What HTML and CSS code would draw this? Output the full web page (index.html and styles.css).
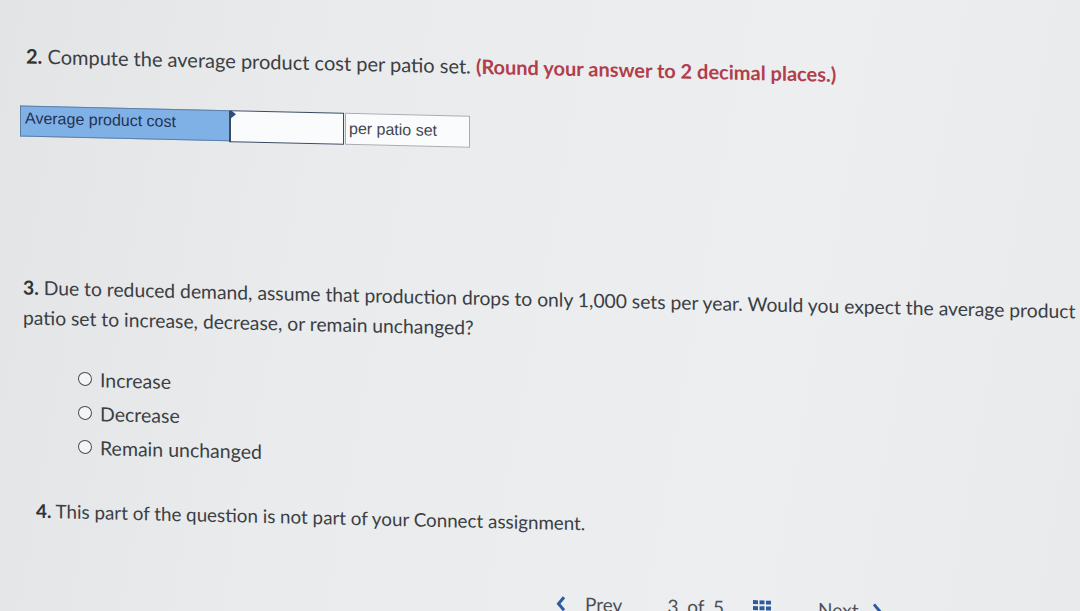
FILE: index.html
```html
<!DOCTYPE html>
<html lang="en">
<head>
  <meta charset="UTF-8">
  <meta name="viewport" content="width=device-width, initial-scale=1.0">
  <title>Question 3 of 5</title>
  <link rel="stylesheet" href="styles.css">
</head>

<body>
  <main class="question">
    <section class="part part-2">
      <p class="prompt">
        <b class="num">2.</b> Compute the average product cost per patio set.
        <strong class="hint">(Round your answer to 2 decimal places.)</strong>
      </p>
      <div class="answer-row">
        <span class="answer-label">Average product cost</span>
        <span class="answer-input"><span class="flag"></span></span>
        <span class="answer-unit">per patio set</span>
      </div>
    </section>

    <section class="part part-3">
      <p class="prompt">
        <b class="num">3.</b> Due to reduced demand, assume that production drops to only 1,000 sets per year. Would you expect the average product cost per
        patio set to increase, decrease, or remain unchanged?
      </p>
      <ul class="choices">
        <li><span class="radio"></span>Increase</li>
        <li><span class="radio"></span>Decrease</li>
        <li><span class="radio"></span>Remain unchanged</li>
      </ul>
    </section>

    <section class="part part-4">
      <p class="prompt"><b class="num">4.</b> This part of the question is not part of your Connect assignment.</p>
    </section>

    <nav class="pager">
      <a class="prev" href="#">
        <svg class="chev" viewBox="0 0 10 16" width="10" height="16">
          <path d="M8 1.5 L2.5 8 L8 14.5" fill="none" stroke="currentColor" stroke-width="3" />
        </svg>
        Prev
      </a>
      <span class="count"><span>3</span> of <span>5</span></span>
      <span class="grid-icon">
        <svg viewBox="0 0 18 16" width="18" height="16">
          <rect x="0" y="0" width="5" height="4" fill="currentColor" />
          <rect x="6.5" y="0" width="5" height="4" fill="currentColor" />
          <rect x="13" y="0" width="5" height="4" fill="currentColor" />
          <rect x="0" y="6" width="5" height="4" fill="currentColor" />
          <rect x="6.5" y="6" width="5" height="4" fill="currentColor" />
          <rect x="13" y="6" width="5" height="4" fill="currentColor" />
          <rect x="0" y="12" width="5" height="4" fill="currentColor" />
          <rect x="6.5" y="12" width="5" height="4" fill="currentColor" />
          <rect x="13" y="12" width="5" height="4" fill="currentColor" />
        </svg>
      </span>
      <a class="next" href="#">
        Next
        <svg class="chev" viewBox="0 0 10 16" width="10" height="16">
          <path d="M2 1.5 L7.5 8 L2 14.5" fill="none" stroke="currentColor" stroke-width="3" />
        </svg>
      </a>
    </nav>
  </main>
</body>
</html>
```

FILE: styles.css
```css
/* Page */
html, body {
  margin: 0;
  height: 100%;
  overflow: hidden;
}

body {
  background: linear-gradient(100deg, #e2e4e6 0%, #e9ebed 30%, #eceef0 70%, #e8eaec 100%);
  font-family: Lato, "Open Sans", sans-serif;
  color: #3b3e43;
}

/* the photo is taken slightly skewed */
.question {
  transform: skewY(1.3deg);
  transform-origin: 0 0;
  padding: 40px 0 0 26px;
}

.prompt {
  margin: 0;
  font-size: 19px;
  line-height: 30px;
}

.part-2 .prompt {
  font-size: 20px;
}

.num {
  font-weight: bold;
  color: #2f3236;
}

.hint {
  color: #b23d4b;
}

/* Answer row */
.answer-row {
  display: flex;
  align-items: flex-start;
  margin: 35px 0 0 -6px;
  font-family: "Liberation Sans", Arial, sans-serif;
  font-size: 16px;
}

.answer-label {
  width: 204px;
  height: 29px;
  padding-left: 4px;
  line-height: 24px;
  background: #80b1e6;
  border: 1px solid #5c7fa6;
  border-right: none;
  color: #1f3252;
}

.answer-input {
  position: relative;
  width: 112px;
  height: 30px;
  background: #fafbfc;
  border: 1px solid #3d4b5e;
  border-left-width: 2px;
}

.flag {
  position: absolute;
  top: -1px;
  left: 0;
  border-top: 4px solid transparent;
  border-bottom: 4px solid transparent;
  border-left: 5px solid #2a4f86;
}

.answer-unit {
  width: 120px;
  height: 30px;
  margin-left: 1px;
  padding-left: 3px;
  line-height: 30px;
  background: #fafbfc;
  border: 1px solid #a9acb0;
  color: #44474c;
}

/* Part 3 */
.part-3 {
  margin: 135px 0 0 -3px;
}

.part-3 .prompt {
  width: 1170px;
  font-size: 19.3px;
}

.choices {
  list-style: none;
  margin: 28px 0 0 55px;
  padding: 0;
  font-size: 19.5px;
}

.choices li {
  display: flex;
  align-items: center;
  height: 34px;
}

.radio {
  width: 12px;
  height: 12px;
  margin-right: 8px;
  border: 1.5px solid #4b4f55;
  border-radius: 50%;
  background: #f4f5f6;
}

/* Part 4 */
.part-4 {
  margin: 33px 0 0 10px;
}

.part-4 .prompt {
  font-size: 18.8px;
}

/* Pager, cut off by the bottom of the photo */
.pager {
  display: flex;
  align-items: center;
  margin: 54px 0 0 530px;
  font-size: 19px;
  color: #4b4f55;
}

.pager a {
  display: flex;
  align-items: center;
  color: #4b4f55;
  text-decoration: none;
}

.chev {
  color: #2d5c9e;
}

.prev .chev {
  margin-right: 19px;
}

.count {
  margin-left: 41px;
}

.count span {
  margin: 0 4px;
}

.grid-icon {
  display: flex;
  margin-left: 25px;
  color: #2d5c9e;
}

.next {
  margin-left: 47px;
}

.next .chev {
  margin-left: 14px;
}
```
